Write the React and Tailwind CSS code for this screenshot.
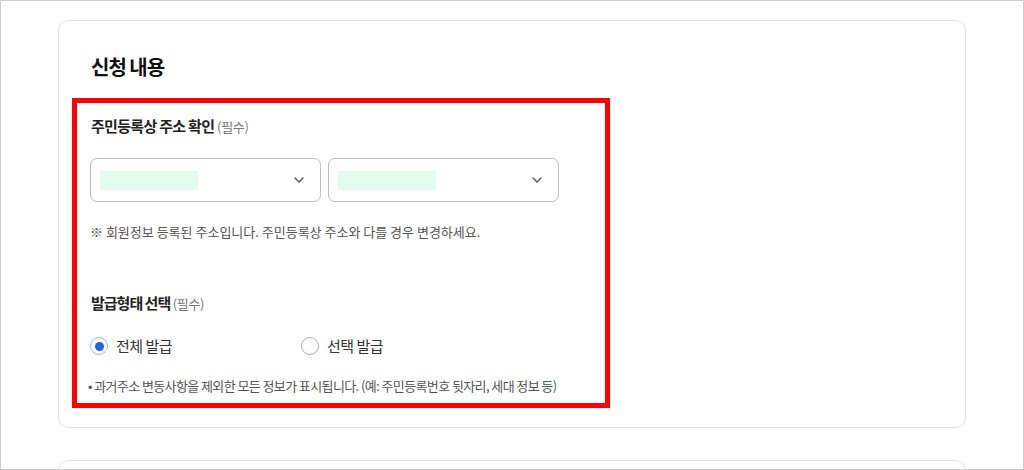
const font = { fontFamily: '"Noto Sans CJK KR", "Noto Sans", sans-serif' };

function Select() {
    return (
        <div className="flex items-center justify-between w-[231px] h-[44px] rounded-[7px] border border-[#bdbdbd] bg-white pl-[9px] pr-[16px]">
            <div className="w-[98px] h-[19px] bg-[#e2fcf2]" />
            <svg width="10" height="6" viewBox="0 0 10 6" fill="none">
                <path d="M1 1l4 4 4-4" stroke="#555" strokeWidth="1.4" strokeLinecap="round" strokeLinejoin="round" />
            </svg>
        </div>
    );
}

function Radio({ checked, label, className = "" }) {
    return (
        <label className={`flex items-center gap-[8px] ${className}`}>
            {checked ? (
                <span className="flex items-center justify-center w-[18px] h-[18px] rounded-full border-[1.5px] border-[#9bbaf2]">
                    <span className="w-[9px] h-[9px] rounded-full bg-[#1b67e6]" />
                </span>
            ) : (
                <span className="w-[18px] h-[18px] rounded-full border border-[#adadad]" />
            )}
            <span className="text-[15px] leading-[22px] tracking-[-0.5px] text-[#333]">{label}</span>
        </label>
    );
}

export default function App() {
    return (
        <div style={font} className="w-[1024px] h-[470px] overflow-hidden border border-[#cfcfcf] bg-white pl-[57px] pt-[19px]">
            <div className="w-[908px] h-[408px] rounded-[10px] border border-[#e2e2e2] pt-[32px] pl-[13px]">
                <h2 className="pl-[19px] text-[20px] leading-[28px] font-bold tracking-[-1px] text-[#111]">신청 내용</h2>

                <div className="mt-[17px] w-[538px] h-[310px] border-[5px] border-[#ff0000] pl-[13px] pt-[12px]">
                    <p className="pl-[1px] text-[15px] leading-[22px] font-bold tracking-[-0.7px] text-[#222]">
                        주민등록상 주소 확인 <span className="text-[13px] font-normal tracking-[-0.3px] text-[#777]">(필수)</span>
                    </p>

                    <div className="mt-[20px] flex gap-[7px]">
                        <Select />
                        <Select />
                    </div>

                    <p className="mt-[21px] text-[13px] leading-[18px] text-[#555]">
                        ※ 회원정보 등록된 주소입니다. 주민등록상 주소와 다를 경우 변경하세요.
                    </p>

                    <p className="mt-[51px] pl-[1px] text-[15px] leading-[22px] font-bold tracking-[-1px] text-[#222]">
                        발급형태 선택 <span className="text-[13px] font-normal tracking-[-0.3px] text-[#777]">(필수)</span>
                    </p>

                    <div className="mt-[20px] flex items-center">
                        <Radio checked label="전체 발급" className="w-[211px]" />
                        <Radio label="선택 발급" />
                    </div>

                    <p className="mt-[20px] -ml-[2px] text-[13px] leading-[18px] tracking-[-0.6px] text-[#555]">
                        • 과거주소 변동사항을 제외한 모든 정보가 표시됩니다. (예: 주민등록번호 뒷자리, 세대 정보 등)
                    </p>
                </div>
            </div>

            <div className="mt-[32px] w-[908px] h-[100px] rounded-[10px] border border-[#e2e2e2]" />
        </div>
    );
}
